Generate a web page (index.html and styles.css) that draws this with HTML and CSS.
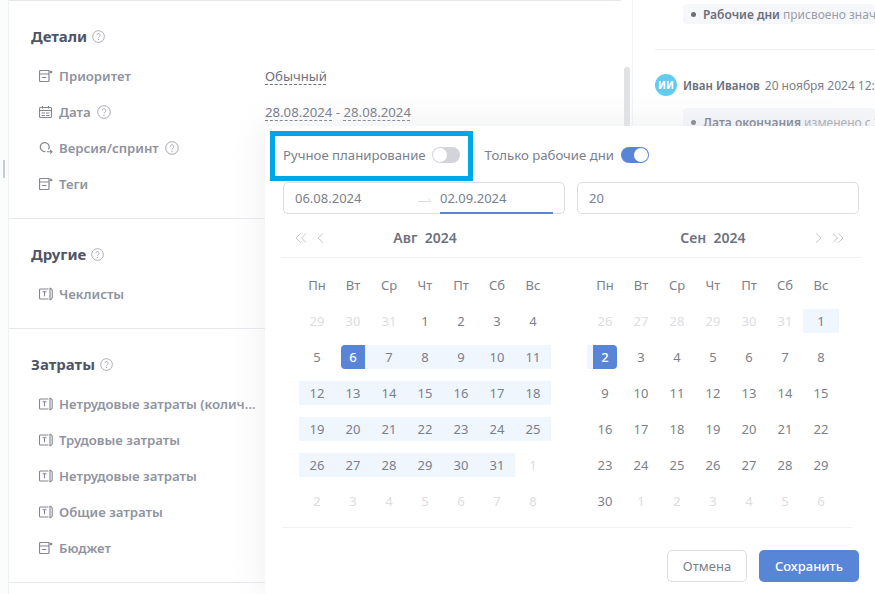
FILE: index.html
```html
<!DOCTYPE html>
<html lang="ru">
<head>
<meta charset="utf-8">
<title>Планирование</title>
<link rel="stylesheet" href="styles.css">
</head>
<body>
<svg class="defs" width="0" height="0" aria-hidden="true">
  <symbol id="i-doc" viewBox="0 0 14 14"><path d="M10 1.500H1.500a1 1 0 0 0-1 1V11.500a1 1 0 0 0 1 1H9a1 1 0 0 0 1-1V1.500zM.5 5h9.500M3 8.500h4.500" fill="none" stroke="currentColor" stroke-width="1.200"/><circle cx="12" cy="3" r="1.300" fill="currentColor"/></symbol>
  <symbol id="i-cal" viewBox="0 0 14 14"><path d="M1.500 2.500h10a1 1 0 0 1 1 1v8a1 1 0 0 1-1 1h-10a1 1 0 0 1-1-1v-8a1 1 0 0 1 1-1zM.5 5.500h12M3.500 1v2.500M9.500 1v2.500M2.500 8h3.500M7 8h3.500M2.500 10.500h3.500M7 10.500h3.500" fill="none" stroke="currentColor" stroke-width="1.100"/></symbol>
  <symbol id="i-ver" viewBox="0 0 14 14"><path d="M9.500 8.500A4.500 4.500 0 1 0 6.500 10.500" fill="none" stroke="currentColor" stroke-width="1.200"/><path d="M8 10.800h5M11.200 9l1.800 1.800-1.800 1.800" fill="none" stroke="currentColor" stroke-width="1.100"/></symbol>
  <symbol id="i-txt" viewBox="0 0 14 14"><path d="M9.500 2H1.500a1 1 0 0 0-1 1v8a1 1 0 0 0 1 1h8M3.500 4.800h4M5.500 4.800v4.400M11 .8v12.400M11.500 1.300c1.300.5 1.700 1.500 1.700 2.500v6.400c0 1-.4 2-1.700 2.500" fill="none" stroke="currentColor" stroke-width="1.100"/></symbol>
  <symbol id="i-help" viewBox="0 0 14 14"><circle cx="7" cy="7" r="6.300" fill="none" stroke="currentColor"/><path d="M5.200 5.600A1.800 1.800 0 1 1 7.900 7.200c-.6.400-.9.700-.9 1.300" fill="none" stroke="currentColor"/><circle cx="7" cy="10.200" r=".7" fill="currentColor"/></symbol>
</svg>
<div class="app">
  <div class="rail"><span class="rail-handle"></span></div>
  <main class="details">
    <section class="sec sec-first">
      <h2 class="sec-title">Детали <svg class="help"><use href="#i-help"/></svg></h2>
      <div class="field"><span class="field-name"><svg class="ico"><use href="#i-doc"/></svg>Приоритет</span><span class="field-value"><u>Обычный</u></span></div>
      <div class="field"><span class="field-name"><svg class="ico"><use href="#i-cal"/></svg>Дата <svg class="help help-sm"><use href="#i-help"/></svg></span><span class="field-value"><u>28.08.2024</u> - <u>28.08.2024</u></span></div>
      <div class="field"><span class="field-name"><svg class="ico"><use href="#i-ver"/></svg>Версия/спринт <svg class="help help-sm"><use href="#i-help"/></svg></span></div>
      <div class="field"><span class="field-name"><svg class="ico"><use href="#i-doc"/></svg>Теги</span></div>
    </section>
    <section class="sec">
      <h2 class="sec-title">Другие <svg class="help"><use href="#i-help"/></svg></h2>
      <div class="field"><span class="field-name"><svg class="ico"><use href="#i-txt"/></svg>Чеклисты</span></div>
    </section>
    <section class="sec">
      <h2 class="sec-title">Затраты <svg class="help"><use href="#i-help"/></svg></h2>
      <div class="field"><span class="field-name"><svg class="ico"><use href="#i-txt"/></svg>Нетрудовые затраты (колич...</span></div>
      <div class="field"><span class="field-name"><svg class="ico"><use href="#i-txt"/></svg>Трудовые затраты</span></div>
      <div class="field"><span class="field-name"><svg class="ico"><use href="#i-txt"/></svg>Нетрудовые затраты</span></div>
      <div class="field"><span class="field-name"><svg class="ico"><use href="#i-txt"/></svg>Общие затраты</span></div>
      <div class="field"><span class="field-name"><svg class="ico"><use href="#i-doc"/></svg>Бюджет</span></div>
    </section>
    <span class="scrollbar"></span>
  </main>
  <aside class="history">
    <div class="change change-top"><span class="dot"></span><b>Рабочие дни</b><span class="nb">присвоено значение</span></div>
    <hr class="hist-line">
    <div class="author"><span class="avatar">ИИ</span><b class="nb">Иван Иванов</b><span class="nb">20 ноября 2024 12:02</span></div>
    <div class="change"><span class="dot"></span><b>Дата окончания</b><span class="nb">изменено с 28.08.2024</span></div>
  </aside>

  <div class="popup">
    <div class="switches">
      <label class="sw-label sw-manual">Ручное планирование <span class="toggle"></span></label>
      <label class="sw-label">Только рабочие дни <span class="toggle toggle-on"></span></label>
    </div>
    <div class="inputs">
      <div class="input input-range">
        <span class="date">06.08.2024</span>
        <svg class="arrow" width="14" height="6" viewBox="0 0 14 6"><path d="M0 4.500h13L10 1.500" fill="none" stroke="#dcdde1"/></svg>
        <span class="date date-active">02.09.2024</span>
      </div>
      <div class="input">20</div>
    </div>
    <div class="cal-heads">
      <div class="cal-head">
        <span class="nav"><svg width="30" height="10" viewBox="0 0 30 10"><path d="M5.500 .5 1 5l4.500 4.500M11 .5 6.500 5 11 9.500M28 .5 23 5l5 4.500" fill="none" stroke="#c5c7ce"/></svg></span>
        <span class="month">Авг &nbsp;2024</span>
      </div>
      <div class="cal-head cal-head-r">
        <span class="month">Сен &nbsp;2024</span>
        <span class="nav"><svg width="30" height="10" viewBox="0 0 30 10"><path d="M1 .5 6 5 1 9.500M18 .5 22.500 5 18 9.500M23.500 .5 28 5l-4.500 4.500" fill="none" stroke="#c5c7ce"/></svg></span>
      </div>
    </div>
    <div class="cals">
      <div class="cal">
        <span class="wd">Пн</span><span class="wd">Вт</span><span class="wd">Ср</span><span class="wd">Чт</span><span class="wd">Пт</span><span class="wd">Сб</span><span class="wd">Вс</span>
        <span class="d off">29</span><span class="d off">30</span><span class="d off">31</span><span class="d">1</span><span class="d">2</span><span class="d">3</span><span class="d">4</span>
        <span class="d">5</span><span class="d in start"><i>6</i></span><span class="d in">7</span><span class="d in">8</span><span class="d in">9</span><span class="d in">10</span><span class="d in">11</span>
        <span class="d in">12</span><span class="d in">13</span><span class="d in">14</span><span class="d in">15</span><span class="d in">16</span><span class="d in">17</span><span class="d in">18</span>
        <span class="d in">19</span><span class="d in">20</span><span class="d in">21</span><span class="d in">22</span><span class="d in">23</span><span class="d in">24</span><span class="d in">25</span>
        <span class="d in">26</span><span class="d in">27</span><span class="d in">28</span><span class="d in">29</span><span class="d in">30</span><span class="d in">31</span><span class="d off">1</span>
        <span class="d off">2</span><span class="d off">3</span><span class="d off">4</span><span class="d off">5</span><span class="d off">6</span><span class="d off">7</span><span class="d off">8</span>
      </div>
      <div class="cal">
        <span class="wd">Пн</span><span class="wd">Вт</span><span class="wd">Ср</span><span class="wd">Чт</span><span class="wd">Пт</span><span class="wd">Сб</span><span class="wd">Вс</span>
        <span class="d off">26</span><span class="d off">27</span><span class="d off">28</span><span class="d off">29</span><span class="d off">30</span><span class="d off">31</span><span class="d in">1</span>
        <span class="d in end"><i>2</i></span><span class="d">3</span><span class="d">4</span><span class="d">5</span><span class="d">6</span><span class="d">7</span><span class="d">8</span>
        <span class="d">9</span><span class="d">10</span><span class="d">11</span><span class="d">12</span><span class="d">13</span><span class="d">14</span><span class="d">15</span>
        <span class="d">16</span><span class="d">17</span><span class="d">18</span><span class="d">19</span><span class="d">20</span><span class="d">21</span><span class="d">22</span>
        <span class="d">23</span><span class="d">24</span><span class="d">25</span><span class="d">26</span><span class="d">27</span><span class="d">28</span><span class="d">29</span>
        <span class="d">30</span><span class="d off">1</span><span class="d off">2</span><span class="d off">3</span><span class="d off">4</span><span class="d off">5</span><span class="d off">6</span>
      </div>
    </div>
    <div class="actions">
      <button class="btn">Отмена</button>
      <button class="btn btn-primary">Сохранить</button>
    </div>
  </div>
</div>
</body>
</html>
```

FILE: styles.css
```css
*, *::before, *::after { box-sizing: border-box; }
html, body { margin: 0; height: 594px; overflow: hidden; background: #fff; }
body { font-family: "Noto Sans", sans-serif; font-size: 13px; color: #7b7f8c; }
.defs { position: absolute; }
.app { position: relative; display: flex; width: 875px; height: 594px; overflow: hidden; }

.rail { width: 9px; flex: none; display: flex; align-items: flex-start; padding: 160px 0 0 3px; background: #fbfcfc; border-right: 1px solid #eef0f2; }
.rail-handle { width: 2px; height: 18px; background: #c9ccd4; }

.details { position: relative; width: 624px; flex: none; padding-right: 11px; border-right: 1px solid #f1f2f4; }
.sec { padding: 24px 22px 16px; border-bottom: 1px solid #e6e8ee; }
.sec-first { border-top: 1px solid #e6e8ee; }
.sec-title { display: flex; align-items: center; gap: 5px; margin: 0 0 11px; height: 22px; font-size: 15px; line-height: 22px; font-weight: 700; color: #4f5565; }
.help { width: 13px; height: 13px; color: #a4a7af; }
.help-sm { width: 14px; height: 14px; margin-left: 6px; }
.field { display: flex; align-items: center; height: 36px; }
.field-name { display: flex; align-items: center; width: 234px; padding-left: 8px; font-size: 13.2px; font-weight: 600; color: #8f93a0; white-space: nowrap; }
.ico { width: 14px; height: 14px; margin-right: 6px; flex: none; color: #83868f; }
.field-value { font-size: 13.2px; color: #6d7180; }
.field-value u { text-decoration: underline dashed #6d7180 1px; text-underline-offset: 3px; }
.scrollbar { position: absolute; top: 67px; right: 2px; width: 6px; height: 200px; border-radius: 3px; background: #e1e2e4; }

.history { flex: 1; min-width: 0; padding: 4px 0 0 22px; font-size: 12px; color: #9a9ea9; white-space: nowrap; overflow: hidden; }
.history b { color: #6a6e7b; font-weight: 600; }
.nb { flex: none; }
.change { height: 28px; margin-left: 28px; padding-left: 8px; display: flex; align-items: center; gap: 3px; background: #f6f7fb; border-radius: 4px; }
.change-top { height: 20px; }
.dot { width: 5px; height: 5px; margin-right: 4px; border-radius: 50%; background: #6a6e7b; flex: none; }
.hist-line { height: 1px; margin: 25px 0 24px; border: 0; background: #eceef1; }
.author { display: flex; align-items: center; gap: 5px; height: 22px; margin-bottom: 12px; color: #7b7f8c; }
.history .author b { font-size: 11.6px; }
.avatar { flex: none; width: 22px; height: 22px; margin-right: 1px; border-radius: 50%; background: #62cbee; color: #fff; font-size: 10px; font-weight: 700; display: flex; align-items: center; justify-content: center; }

.popup { position: absolute; left: 265px; top: 126px; width: 610px; height: 468px; padding: 0 16px 0 18px; background: #fff; border-radius: 4px 0 0 0; box-shadow: 0 0 36px rgba(226, 227, 230, .65); }
.switches { display: flex; align-items: center; height: 55px; margin: 0 0 1px; gap: 25px; padding-top: 3px; }
.sw-label { position: relative; display: flex; align-items: center; gap: 6px; font-size: 13.2px; color: #7b7f8c; }
.sw-manual::before { content: ""; position: absolute; left: -13px; top: -15px; width: 203px; height: 50px; border: 5px solid #00a7e7; }
.toggle { position: relative; display: block; width: 28px; height: 16px; border-radius: 8px; background: #d3d4d9; }
.toggle::after { content: ""; position: absolute; left: 1px; top: 1px; width: 14px; height: 14px; border-radius: 50%; background: #fff; }
.toggle-on { margin-left: 1px; background: #5985d6; }
.toggle-on::after { left: 13px; }

.inputs { display: flex; gap: 12px; }
.input { display: flex; align-items: center; flex: 1 1 0; min-width: 0; height: 32px; padding: 0 11px; border: 1px solid #dcdde1; border-radius: 5px; font-size: 13px; color: #7b7f8c; }
.input-range { position: relative; }
.arrow { position: absolute; left: 134px; top: 14px; }
.date { width: 113px; }
.date-active { position: absolute; left: 156px; top: -1px; bottom: -1px; padding-top: 2px; display: flex; align-items: center; border-bottom: 2px solid #5985d6; }

.cal-heads { display: flex; height: 44px; margin-right: -2px; margin-left: -2px; border-bottom: 1px solid #eff0f2; }
.cal-head { position: relative; display: flex; align-items: center; justify-content: center; width: 288px; padding-top: 3px; }
.cal-head-r { flex: 1; padding-right: 4px; }
.month { font-size: 14px; font-weight: 600; color: #6d7180; }
.nav { position: absolute; left: 14px; top: 19px; line-height: 0; }
.cal-head-r .nav { left: auto; right: 16px; }

.cals { display: flex; gap: 36px; padding: 9px 0 8px 16px; border-bottom: 1px solid #eff0f2; margin-right: 7px; }
.cal { display: grid; grid-template-columns: repeat(7, 36px); grid-auto-rows: 36px; }
.wd, .d { display: flex; align-items: center; justify-content: center; font-size: 13px; color: #7b7f8c; }
.d { position: relative; z-index: 0; }
.d i { font-style: normal; }
.off { color: #dcdde0; }
.in::before { content: ""; position: absolute; z-index: -1; left: 0; right: 0; top: 6px; bottom: 6px; background: #eff6fe; }
.start::before { left: 18px; }
.end::before { left: 0; right: 18px; }
.start i, .end i { display: flex; align-items: center; justify-content: center; width: 24px; height: 24px; background: #5985d6; color: #fff; font-weight: 500; }
.start i { border-radius: 4px 0 0 4px; }
.end i { border-radius: 0 4px 4px 0; }

.actions { display: flex; justify-content: flex-end; gap: 12px; padding-top: 22px; }
.btn { width: 80px; height: 32px; border: 1px solid #dcdde1; border-radius: 5px; background: #fff; font: 13px "Noto Sans", sans-serif; color: #7b7f8c; }
.btn-primary { width: 100px; border: 0; background: #5985d6; color: #fff; font-weight: 500; }
```
